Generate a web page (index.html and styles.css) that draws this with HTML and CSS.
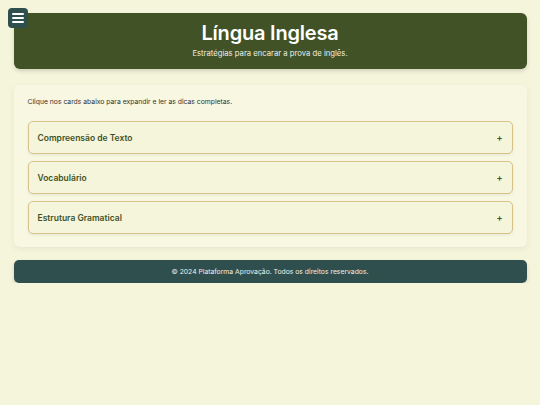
FILE: index.html
```html
<!DOCTYPE html>
<html lang="pt-BR">
<head>
<meta charset="utf-8">
<title>Língua Inglesa</title>
<link rel="stylesheet" href="styles.css">
</head>
<body>
<button class="menu-btn" aria-label="Menu">
  <svg width="12" height="10" viewBox="0 0 12 10"><rect x="0" y="0" width="12" height="2" rx="1" fill="#fff"/><rect x="0" y="4" width="12" height="2" rx="1" fill="#fff"/><rect x="0" y="8" width="12" height="2" rx="1" fill="#fff"/></svg>
</button>
<div class="container">
  <header class="header">
    <h1 class="title">Língua Inglesa</h1>
    <p class="subtitle">Estratégias para encarar a prova de inglês.</p>
  </header>
  <main class="panel">
    <p class="intro">Clique nos cards abaixo para expandir e ler as dicas completas.</p>
    <div class="cards">
      <div class="card"><span class="card-title">Compreensão de Texto</span><span class="plus">+</span></div>
      <div class="card"><span class="card-title">Vocabulário</span><span class="plus">+</span></div>
      <div class="card"><span class="card-title">Estrutura Gramatical</span><span class="plus">+</span></div>
    </div>
  </main>
  <footer class="footer">© 2024 Plataforma Aprovação. Todos os direitos reservados.</footer>
</div>
</body>
</html>
```

FILE: styles.css
```css
* { box-sizing: border-box; }
html, body { margin: 0; padding: 0; }
body {
  background: #f5f5dc;
  font-family: Inter, "Noto Sans", sans-serif;
  color: #333;
}
.menu-btn {
  position: absolute;
  left: 8px;
  top: 8px;
  width: 20px;
  height: 20px;
  border: none;
  border-radius: 4px;
  background: #2f4f4f;
  padding: 0;
  display: flex;
  align-items: center;
  justify-content: center;
  z-index: 2;
}
.menu-btn svg { display: block; }
.container {
  width: 95%;
  margin: 0 auto;
  padding-top: 13px;
}
.header {
  background: #405226;
  border-radius: 6px;
  height: 56px;
  padding-bottom: 3px;
  display: flex;
  flex-direction: column;
  align-items: center;
  justify-content: center;
  box-shadow: 0 2px 4px rgba(0,0,0,0.15);
}
.title {
  margin: 0;
  color: #fff;
  font-size: 20px;
  font-weight: 600;
  line-height: 25px;
  letter-spacing: -0.2px;
}
.subtitle {
  margin: 3px 0 0;
  color: #f0f0e6;
  font-size: 7.7px;
  line-height: 10px;
}
.panel {
  margin-top: 16px;
  background: #f7f7e2;
  border-radius: 6px;
  padding: 11px 14px 13px;
  box-shadow: 0 2px 6px rgba(0,0,0,0.06);
}
.intro {
  margin: 0 0 13px;
  font-size: 6.8px;
  line-height: 12px;
  color: #333;
}
.cards {
  display: flex;
  flex-direction: column;
  gap: 7px;
}
.card {
  height: 33px;
  border: 1px solid #d9c38a;
  border-radius: 5px;
  background: #f5f5dc;
  display: flex;
  align-items: center;
  justify-content: space-between;
  padding: 0 9px 0 9px;
  box-shadow: 0 1px 3px rgba(0,0,0,0.08);
}
.card-title {
  font-size: 8.5px;
  font-weight: 600;
  color: #3e5226;
}
.plus {
  font-size: 9px;
  font-weight: 600;
  color: #3e5226;
}
.footer {
  margin-top: 13px;
  height: 23px;
  background: #2f4f4f;
  border-radius: 5px;
  color: #f0f0e8;
  font-size: 6.8px;
  display: flex;
  align-items: center;
  justify-content: center;
  box-shadow: 0 2px 4px rgba(0,0,0,0.15);
}
```
